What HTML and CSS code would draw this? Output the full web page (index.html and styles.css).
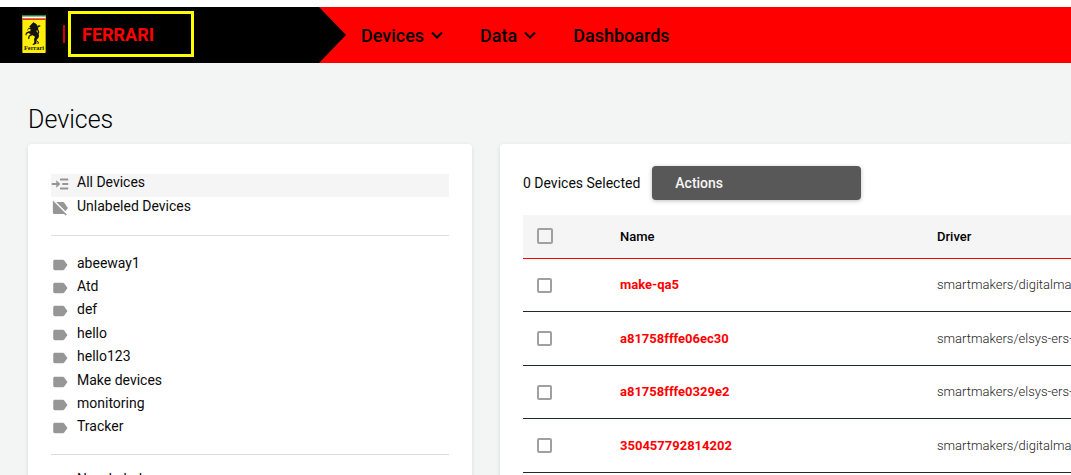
FILE: index.html
```html
<!DOCTYPE html>
<html lang="en">
<head>
<meta charset="utf-8">
<title>Devices</title>
<link rel="stylesheet" href="styles.css">
</head>
<body>
<svg class="sprite" aria-hidden="true">
  <symbol id="label" viewBox="0 0 24 24"><path d="M17.63 5.84C17.27 5.33 16.67 5 16 5L5 5.01C3.9 5.01 3 5.9 3 7v10c0 1.1.9 1.99 2 1.99L16 19c.67 0 1.27-.33 1.63-.84L22 12l-4.370-6.160z"/></symbol>
  <symbol id="label-off" viewBox="0 0 24 24"><path d="M2.500 2L21 20.500 19.500 22l-2-2H4.500C3.400 20 2.500 19.100 2.500 18zM22.500 12l-4.800-7.100C17.300 4.300 16.700 4 16 4H7l12.300 12.300z"/></symbol>
  <symbol id="all" viewBox="0 0 24 24"><path d="M1 10.700h6V7l5.500 5L7 17v-3.700H1zM12 4.700h11v2.600H12zM15 10.700h8v2.600h-8zM12 16.700h11v2.600H12z"/></symbol>
  <symbol id="chevron" viewBox="0 0 12 8"><path d="M1 1.500l5 5 5-5" fill="none" stroke="currentColor" stroke-width="2"/></symbol>
  <symbol id="plus" viewBox="0 0 24 24"><path d="M11 4h2v7h7v2h-7v7h-2v-7H4v-2h7z"/></symbol>
</svg>
<header class="topbar">
  <div class="brand">
    <svg class="logo" viewBox="0 0 70 114" role="img" aria-label="Ferrari">
      <rect width="70" height="114" rx="2" fill="#ffee0a"/>
      <rect width="70" height="5" fill="#16864a"/>
      <rect y="5" width="70" height="5" fill="#fff"/>
      <rect y="10" width="70" height="5" fill="#e2303a"/>
      <path fill="#111" d="M27 28l4-4 3-3 2 3c6 1 10 6 10 13 0 6-4 9-3 14 4 2 7 6 7 11 0 5-3 8-6 11l-3 6 2 6-4 3-6 2-3-2 5-3 1-5-1-7 3-8-7-4-5 1-5 4 1 4-3 3-2-4 2-6 6-6-7-3-5 3-1 5-3-3 2-6 8-4 5 0 1-9-3-5-4 3z"/>
      <g fill="none" stroke="#111" stroke-linecap="round" stroke-linejoin="round">
        <path stroke-width="3" d="M27 41l-7-1-4 4M41 77l7 4-1 5"/>
        <path stroke-width="4" d="M44 57c8-2 4-8 2-13-2-6 1-12 6-11"/>
      </g>
      <text x="35" y="106" text-anchor="middle" class="logo-name">Ferrari</text>
    </svg>
    <span class="bar"></span>
    <a class="brand-name" href="#">FERRARI</a>
  </div>
  <nav class="nav">
    <button type="button">Devices <svg><use href="#chevron"/></svg></button>
    <button type="button">Data <svg><use href="#chevron"/></svg></button>
    <a href="#">Dashboards</a>
  </nav>
</header>
<main class="page">
  <h1>Devices</h1>
  <div class="columns">
    <aside class="card labels">
      <ul class="views">
        <li class="current"><svg><use href="#all"/></svg><a href="#">All Devices</a></li>
        <li><svg><use href="#label-off"/></svg><a href="#">Unlabeled Devices</a></li>
      </ul>
      <ul class="tags">
        <li><svg><use href="#label"/></svg><a href="#">abeeway1</a></li>
        <li><svg><use href="#label"/></svg><a href="#">Atd</a></li>
        <li><svg><use href="#label"/></svg><a href="#">def</a></li>
        <li><svg><use href="#label"/></svg><a href="#">hello</a></li>
        <li><svg><use href="#label"/></svg><a href="#">hello123</a></li>
        <li><svg><use href="#label"/></svg><a href="#">Make devices</a></li>
        <li><svg><use href="#label"/></svg><a href="#">monitoring</a></li>
        <li><svg><use href="#label"/></svg><a href="#">Tracker</a></li>
      </ul>
      <button class="new-label" type="button"><svg><use href="#plus"/></svg>New Label</button>
    </aside>
    <section class="card devices">
      <div class="tools"><span>0 Devices Selected</span><button type="button">Actions</button></div>
      <table>
        <thead>
          <tr><th class="pick"><input type="checkbox" aria-label="Select all devices"></th><th class="name">Name</th><th>Driver</th></tr>
        </thead>
        <tbody>
          <tr><td><input type="checkbox" aria-label="Select make-qa5"></td><td><a href="#">make-qa5</a></td><td>smartmakers/digitalmat</td></tr>
          <tr><td><input type="checkbox" aria-label="Select a81758fffe06ec30"></td><td><a href="#">a81758fffe06ec30</a></td><td>smartmakers/elsys-ers-</td></tr>
          <tr><td><input type="checkbox" aria-label="Select a81758fffe0329e2"></td><td><a href="#">a81758fffe0329e2</a></td><td>smartmakers/elsys-ers-</td></tr>
          <tr><td><input type="checkbox" aria-label="Select 350457792814202"></td><td><a href="#">350457792814202</a></td><td>smartmakers/digitalmat</td></tr>
        </tbody>
      </table>
    </section>
  </div>
</main>
</body>
</html>
```
FILE: styles.css
```css
* { box-sizing: border-box; }
html { background: #f3f5f5; }
body {
  margin: 0;
  height: 100vh;
  overflow: hidden;
  border-top: 7px solid #fff;
  font: 14px/23px Roboto, "Liberation Sans", sans-serif;
  color: #0b0b0b;
}
a { color: inherit; text-decoration: none; }
button { font: inherit; color: inherit; border: 0; background: none; padding: 0; }
ul { list-style: none; margin: 0; padding: 0; }
.sprite { position: absolute; width: 0; height: 0; }

.topbar { display: flex; height: 56px; background: #f00; }
.brand {
  display: flex;
  align-items: center;
  flex: 0 0 346px;
  padding: 0 0 2px 22px;
  background: #000;
  clip-path: polygon(0 0, 319px 0, 100% 50%, 319px 100%, 0 100%);
}
.logo { width: 24px; height: 38px; }
.logo-name { font: bold 19px "Liberation Serif", serif; fill: #111; }
.bar { width: 2px; height: 18px; margin: 0 3px 0 17px; background: #d00000; }
.brand-name {
  width: 126px;
  height: 46px;
  padding-left: 11px;
  border: 3px solid #ff0;
  color: #f00;
  font-size: 18px;
  font-weight: 700;
  line-height: 42px;
}
.nav { display: flex; align-items: center; gap: 37px; padding-left: 15px; font-size: 18px; font-weight: 500; color: #000; }
.nav button { display: flex; align-items: center; gap: 7px; }
.nav svg { width: 12px; height: 8px; }

.page { padding: 41px 0 0 28px; }
h1 { margin: 0 0 8px; font-size: 25px; font-weight: 300; line-height: 32px; color: #000; }
.columns { display: grid; grid-template-columns: 444px minmax(0, 1fr); gap: 28px; }
.card { background: #fff; border-radius: 4px; box-shadow: 0 1px 4px rgba(0, 0, 0, .1); }

.labels { padding: 30px 23px; }
.labels li { display: flex; align-items: center; gap: 8px; line-height: 16px; padding-bottom: 6px; }
.labels svg { width: 18px; height: 18px; fill: #969696; margin-bottom: -4px; }
.views { display: grid; grid-auto-rows: 23px; gap: 1px; padding-bottom: 14px; border-bottom: 1px solid #dedede; }
.views li { padding-bottom: 8px; }
.current { background: #f5f5f5; }
.tags { display: grid; grid-auto-rows: 1fr; min-height: 219px; padding: 18px 0 13px; border-bottom: 1px solid #dedede; }
.new-label { display: flex; align-items: center; gap: 8px; margin-top: 13px; }

.devices { padding: 22px 0 0 23px; border-radius: 4px 0 0 4px; overflow: hidden; }
.tools { display: flex; align-items: center; gap: 12px; margin-bottom: 15px; }
.tools button {
  width: 209px;
  height: 34px;
  padding-left: 23px;
  border-radius: 4px;
  background: #585858;
  box-shadow: 0 1px 4px rgba(0, 0, 0, .25);
  color: #f5f5f5;
  font-weight: 500;
  text-align: left;
}
table { width: 100%; table-layout: fixed; border-collapse: separate; border-spacing: 0; font-size: 13px; line-height: 20px; }
th, td { padding: 0; text-align: left; vertical-align: middle; white-space: nowrap; overflow: hidden; }
th { height: 44px; background: #f5f5f5; border-bottom: 1px solid #f00; font-weight: 500; color: #000; }
td { height: 53px; border-bottom: 1px solid #1e2a30; font-weight: 300; color: #222; }
tr:nth-child(even) td { height: 54px; }
td a { color: #f00; font-weight: 700; }
.pick { width: 97px; padding-bottom: 2px; }
.name { width: 317px; }
input {
  appearance: none;
  display: block;
  width: 15px;
  height: 15px;
  margin: 0 0 0 14px;
  border: 2px solid #a0a0a0;
  border-radius: 2px;
  background: #fff;
}
th input { width: 16px; height: 16px; background: transparent; }
```
